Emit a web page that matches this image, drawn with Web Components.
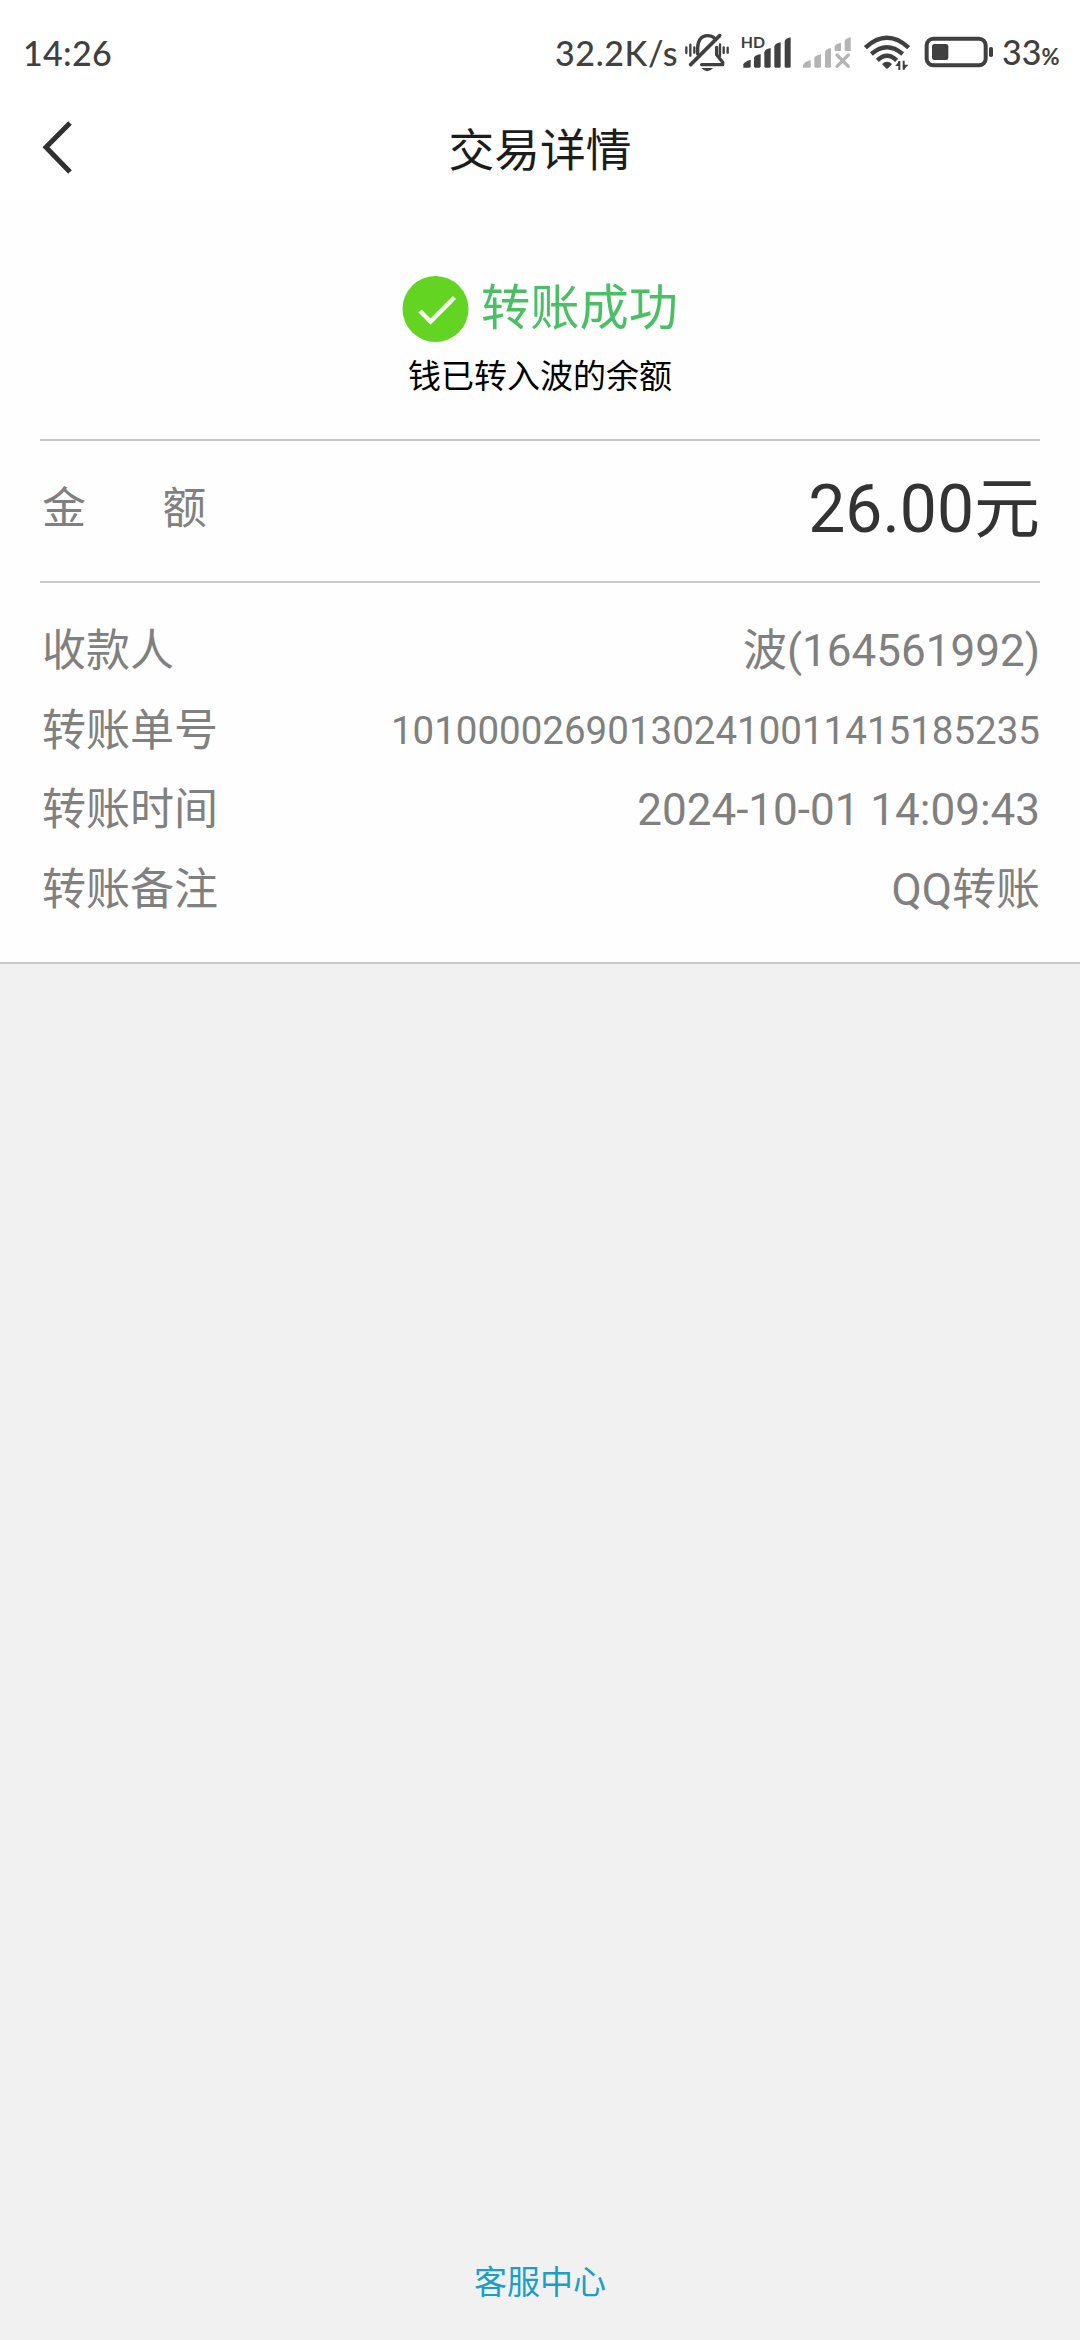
<!DOCTYPE html>
<html lang="zh-CN">
<head>
<meta charset="utf-8">
<title>交易详情</title>
<style>
  html, body { margin: 0; height: 100%; }
  body {
    background: #f1f1f1;
    font-family: Roboto, "Noto Sans CJK SC", sans-serif;
    color: #808080;
  }
</style>
</head>
<body>
<transfer-page>
  <status-bar slot="top" time="14:26" speed="32.2K/s" battery="33"></status-bar>
  <nav-bar slot="top">交易详情</nav-bar>
  <transfer-result>转账成功<span slot="note">钱已转入波的余额</span></transfer-result>
  <amount-row>26.00元<span slot="label">金&nbsp;&nbsp;&nbsp;&nbsp;&nbsp;&nbsp;&nbsp;额</span></amount-row>
  <detail-list>
    <detail-row label="收款人">波(164561992)</detail-row>
    <detail-row label="转账单号" small>101000026901302410011415185235</detail-row>
    <detail-row label="转账时间">2024-10-01 14:09:43</detail-row>
    <detail-row label="转账备注">QQ转账</detail-row>
  </detail-list>
  <a slot="footer">客服中心</a>
</transfer-page>

<script>
function define(name, html, setup) {
  const template = document.createElement("template");
  template.innerHTML = html;
  customElements.define(name, class extends HTMLElement {
    constructor() {
      super();
      this.attachShadow({ mode: "open" });
      this.shadowRoot.appendChild(template.content.cloneNode(true));
    }
    connectedCallback() {
      if (setup) setup(this, this.shadowRoot);
    }
  });
}

define("transfer-page", `
  <style>
    :host { display: flex; flex-direction: column; width: 1080px; height: 2340px; }
    .card { background: #fefefe; border-bottom: 2px solid #c8c8c8; height: 762px; }
    footer {
      margin-top: auto;
      height: 102px;
      text-align: center;
      font-size: 33px;
      line-height: 84px;
      color: #1b9fc9;
      font-family: "Noto Sans CJK SC", sans-serif;
    }
  </style>
  <slot name="top"></slot>
  <main class="card"><slot></slot></main>
  <footer><slot name="footer"></slot></footer>
`);

// icon drawings use 3 units per pixel
define("status-bar", `
  <style>
    :host {
      display: flex;
      box-sizing: border-box;
      height: 100px;
      padding: 20px 22px 0 23px;
      background: #fff;
      color: #404040;
      font: 500 34px/65px Lato, sans-serif;
    }
    svg { display: block; height: 70px; flex: none; }
    #time { letter-spacing: 0.3px; }
    #speed { margin-left: auto; letter-spacing: 0.6px; width: 128px; }
    .bell { width: 48px; margin-right: 8px; }
    .sim1 { width: 53px; margin-right: 10px; }
    .sim2 { width: 50px; margin-right: 10px; }
    .wifi { width: 49px; margin-right: 13px; }
    .power { width: 70px; margin-right: 8px; }
    .percent { width: 56px; line-height: 63px; white-space: nowrap; }
    small { font-size: 22px; font-weight: 700; }
  </style>
  <span id="time"></span>
  <span id="speed"></span>
  <svg class="bell" viewBox="429 0 144 210" fill="none" stroke="#404040" stroke-width="10" stroke-linecap="round">
    <path d="M439 82V99M451 74V107M463 82V98M540 73V108M551 82V99M563 83V98" stroke-width="7"/>
    <path d="M473 102V84C473 62 484 47 502 47C512 47 519 50 524 55"/>
    <path d="M530 82V104L548 127V134H485" stroke-linejoin="round"/>
    <path d="M539 47L452 134" stroke-width="11"/>
    <path d="M484 144H519Q502 164 484 144Z" fill="#404040" stroke="none"/>
  </svg>
  <svg class="sim1" viewBox="597 0 159 210" fill="#404040">
    <text x="602" y="83" font-family="Lato" font-size="47" font-weight="700" textLength="73" lengthAdjust="spacingAndGlyphs">HD</text>
    <path d="M610 143V133Q612 125 632 119V139Q632 143 628 143Z"/>
    <path d="M642 139V114Q642 106 662 102V139Q662 143 658 143H646Q642 143 642 139Z"/>
    <path d="M673 139V97Q673 88 692 84V139Q692 143 688 143H677Q673 143 673 139Z"/>
    <path d="M703 139V80Q703 71 722 67V139Q722 143 718 143H707Q703 143 703 139Z"/>
    <path d="M734 139V65Q734 56 752 52V139Q752 143 748 143H738Q734 143 734 139Z"/>
  </svg>
  <svg class="sim2" viewBox="36 0 150 210" fill="#b4b4b4">
    <path d="M39 143V136Q41 126 62 120V139Q62 143 58 143Z"/>
    <path d="M73 139V115Q73 107 93 103V139Q93 143 89 143H77Q73 143 73 139Z"/>
    <path d="M105 139V97Q105 88 123 84V139Q123 143 119 143H109Q105 143 105 139Z"/>
    <path d="M134 93V80Q134 72 153 68V89Q153 93 149 93Z"/>
    <path d="M164 89V64Q164 56 182 52V93H168Q164 93 164 89Z"/>
    <path d="M141 105L175 139M175 105L141 139" stroke="#b4b4b4" stroke-width="10" stroke-linecap="round"/>
  </svg>
  <svg class="wifi" viewBox="216 0 147 210" fill="none" stroke="#404040" stroke-width="13">
    <path d="M226 83Q291 24 356 83"/>
    <path d="M244 102Q291 61 338 102"/>
    <path d="M262 121Q291 93 320 121"/>
    <path d="M276 132Q291 118 306 132L295 144Q291 148 287 144Z" fill="#404040" stroke="none"/>
    <path d="M328 123V150M341 149V122" stroke-width="6"/>
    <path d="M316 138L328 122V138ZM341 134H355L341 150Z" fill="#404040" stroke="none"/>
  </svg>
  <svg class="power" viewBox="402 0 210 210" fill="#404040">
    <rect x="410" y="56" width="177" height="80" rx="20" fill="none" stroke="#404040" stroke-width="12"/>
    <rect x="426" y="72" width="49" height="48" rx="7"/>
    <rect x="597" y="81" width="12" height="30" rx="5"/>
  </svg>
  <span class="percent"><span id="level"></span><small>%</small></span>
`, (el, root) => {
  root.getElementById("time").textContent = el.getAttribute("time");
  root.getElementById("speed").textContent = el.getAttribute("speed");
  root.getElementById("level").textContent = el.getAttribute("battery");
});

define("nav-bar", `
  <style>
    :host {
      display: grid;
      grid-template-columns: 120px 1fr 120px;
      height: 100px;
      background: #fff;
      color: #1c1c1c;
      font: 400 45.8px/94px "Noto Sans CJK SC", sans-serif;
      text-align: center;
    }
    svg { width: 120px; height: 100px; }
  </style>
  <svg viewBox="0 0 120 100" fill="none" stroke="#303030" stroke-width="5">
    <path d="M70 23L46 47.300L70 72"/>
  </svg>
  <span><slot></slot></span>
`);

define("transfer-result", `
  <style>
    :host { display: block; box-sizing: border-box; height: 239px; padding-top: 76px; font-family: "Noto Sans CJK SC", sans-serif; }
    .title {
      display: flex;
      justify-content: center;
      align-items: center;
      gap: 12px;
      font-size: 49.300px;
      line-height: 60px;
      height: 66px;
      color: #4bbf64;
    }
    .title span { margin-bottom: 10px; }
    svg { width: 67px; height: 66px; }
    .note { text-align: center; font-size: 33px; line-height: 40px; margin-top: 12px; color: #000; }
  </style>
  <div class="title">
    <svg viewBox="0 0 67 66">
      <circle cx="33.500" cy="33" r="33" fill="#62d421"/>
      <path d="M18 35L28.500 45.500L52.500 21.500" fill="none" stroke="#f4fdeb" stroke-width="4.500"/>
    </svg>
    <span><slot></slot></span>
  </div>
  <div class="note"><slot name="note"></slot></div>
`);

define("amount-row", `
  <style>
    :host {
      display: flex;
      justify-content: space-between;
      height: 140px;
      margin: 0 40px;
      border: solid #c8c8c8;
      border-width: 2px 0;
      font-size: 44px;
      line-height: 137px;
    }
    .label { margin-left: 2px; }
    .value { font-size: 66px; color: #333; }
  </style>
  <span class="label"><slot name="label"></slot></span>
  <span class="value"><slot></slot></span>
`);

define("detail-list", `
  <style>
    :host { display: block; padding: 28px 40px 0 42px; }
  </style>
  <slot></slot>
`);

define("detail-row", `
  <style>
    :host {
      display: flex;
      justify-content: space-between;
      height: 79.600px;
      font-size: 44px;
      line-height: 80px;
    }
    :host([small]) .value { font-size: 38.500px; }
  </style>
  <span id="label"></span>
  <span class="value"><slot></slot></span>
`, (el, root) => {
  root.getElementById("label").textContent = el.getAttribute("label");
});
</script>
</body>
</html>
